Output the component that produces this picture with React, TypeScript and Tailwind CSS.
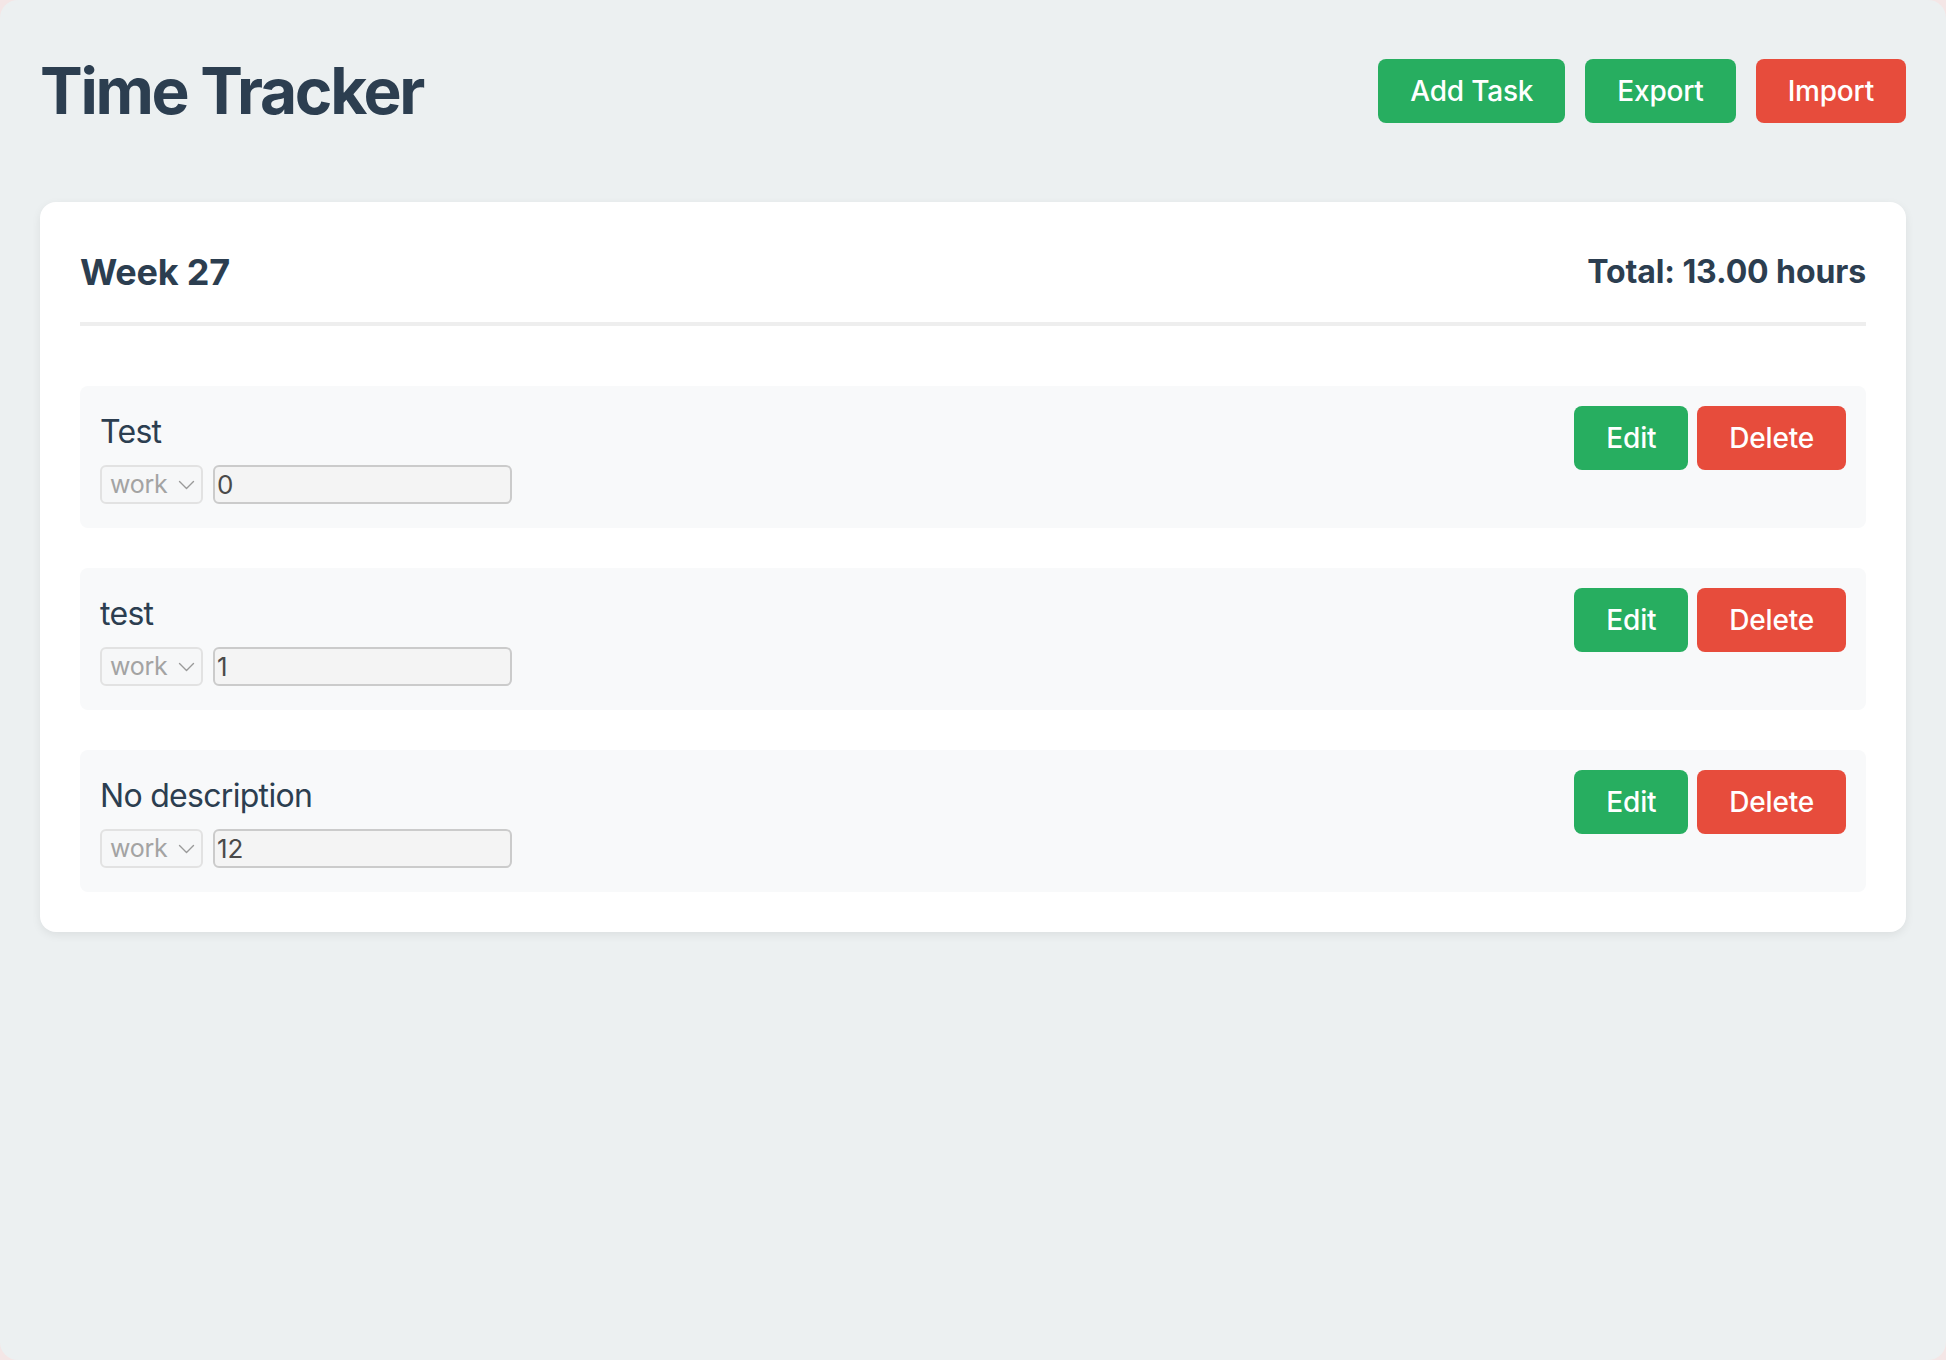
import React from "react";

const tasks = [
  { title: "Test", category: "work", hours: "0" },
  { title: "test", category: "work", hours: "1" },
  { title: "No description", category: "work", hours: "12" },
];

function Chevron() {
  return (
    <svg width="17" height="10" viewBox="0 0 17 10" fill="none">
      <path d="M1.5 1.5 L8.5 8.5 L15.5 1.5" stroke="#9a9a9a" strokeWidth="1.4" strokeLinecap="round" strokeLinejoin="round" />
    </svg>
  );
}

export default function App() {
  return (
    <div className="min-h-screen bg-[#f4e6e6]">
      <div className="min-h-screen rounded-[18px] bg-[#ecf0f1] px-[40px] pt-[52px] pb-10 font-['Inter',sans-serif]">
        {/* Header */}
        <header className="flex h-[78px] items-center justify-between">
          <h1 className="text-[64px] font-bold leading-[78px] tracking-[-2.3px] text-[#2c3e50]">Time Tracker</h1>
          <div className="flex gap-[20px]">
            <button className="h-[64px] rounded-[8px] bg-[#27ae60] px-[32px] text-[28px] font-medium tracking-[-0.2px] text-white">Add Task</button>
            <button className="h-[64px] rounded-[8px] bg-[#27ae60] px-[32px] text-[28px] font-medium tracking-[-0.2px] text-white">Export</button>
            <button className="h-[64px] rounded-[8px] bg-[#e74c3c] px-[32px] text-[28px] font-medium tracking-[-0.2px] text-white">Import</button>
          </div>
        </header>

        {/* Week card */}
        <section className="mt-[72px] rounded-[16px] bg-white px-[40px] pt-[48px] pb-[40px] shadow-[0_3px_10px_rgba(0,0,0,0.07)]">
          <div className="flex items-center justify-between border-b-4 border-[#eeeeee] pb-[28px]">
            <h2 className="text-[36px] font-bold leading-[44px] tracking-[-0.2px] text-[#2c3e50]">Week 27</h2>
            <span className="text-[32px] font-bold leading-[44px] tracking-[-0.1px] text-[#2c3e50]">Total: 13.00 hours</span>
          </div>

          <div className="mt-[60px] flex flex-col gap-[40px]">
            {tasks.map((task) => (
              <div key={task.title} className="flex h-[142px] items-start justify-between rounded-[8px] bg-[#f8f9fa] p-[20px]">
                <div>
                  <div className="mt-[2px] text-[32px] leading-[48px] tracking-[-0.7px] text-[#2c3e50]">{task.title}</div>
                  <div className="mt-[9px] flex gap-[10px]">
                    <div className="flex h-[39px] w-[103px] items-center justify-between rounded-[6px] border-2 border-[#e2e2e2] bg-[#f6f7f8] pr-[6px] pl-[8px] text-[25px] tracking-[-0.3px] text-[#a3a3a3]">
                      <span>{task.category}</span>
                      <Chevron />
                    </div>
                    <input
                      readOnly
                      value={task.hours}
                      className="h-[39px] w-[299px] rounded-[6px] border-2 border-[#cbcbcb] bg-[#f4f4f4] pl-[2px] text-[26px] text-[#4a4a4a] outline-none"
                    />
                  </div>
                </div>
                <div className="flex gap-[9px]">
                  <button className="h-[64px] rounded-[8px] bg-[#27ae60] px-[32px] text-[28px] font-medium tracking-[-0.2px] text-white">Edit</button>
                  <button className="h-[64px] rounded-[8px] bg-[#e74c3c] px-[32px] text-[28px] font-medium tracking-[-0.2px] text-white">Delete</button>
                </div>
              </div>
            ))}
          </div>
        </section>
      </div>
    </div>
  );
}
